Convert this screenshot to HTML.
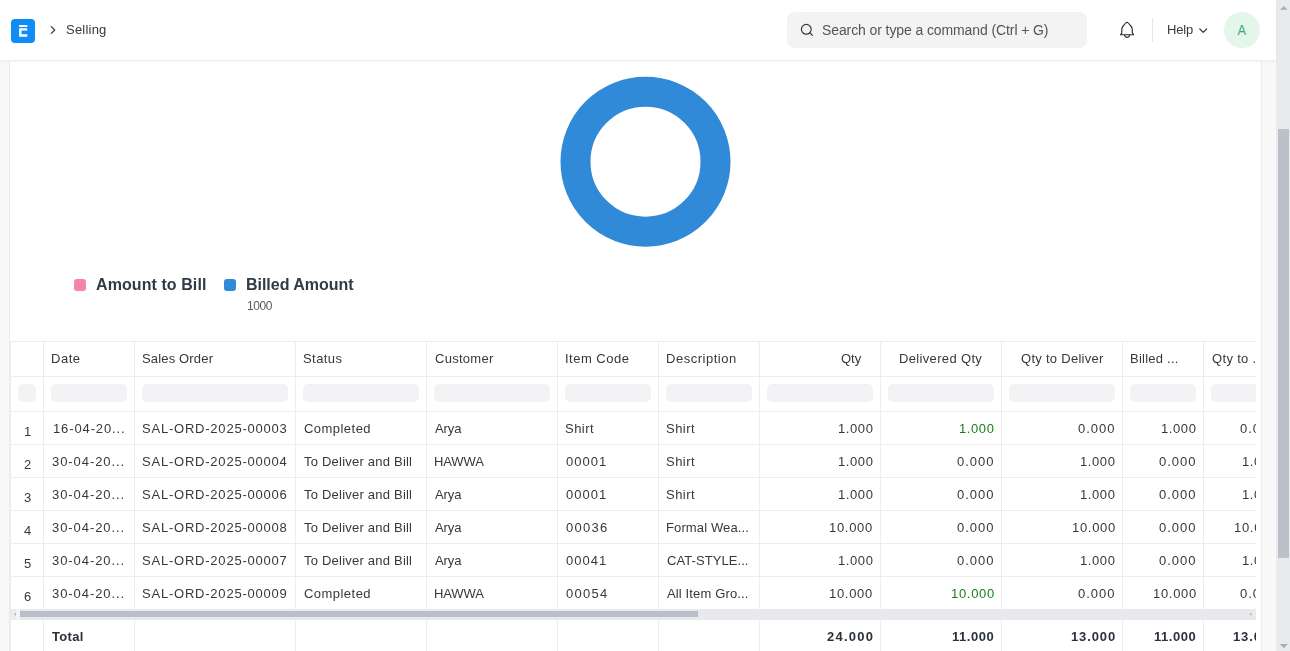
<!DOCTYPE html>
<html><head><meta charset="utf-8"><title>Sales Order Analysis</title>
<style>
*{box-sizing:border-box;margin:0;padding:0}
html,body{width:1290px;height:651px;overflow:hidden;background:#f8f8f8;font-family:"Liberation Sans",sans-serif;color:#383838;font-size:13px}
.t{will-change:transform;position:absolute;white-space:nowrap;line-height:16px;font-size:13px;color:#383838}
#nav{position:absolute;left:0;top:0;width:1276px;height:61px;background:#fff;border-bottom:1px solid #eeeeee;box-shadow:0 1px 3px rgba(0,0,0,.035);z-index:5}
#logo{position:absolute;left:11px;top:19px;width:24px;height:24px;border-radius:4px;background:#0f8cf5}
#search{position:absolute;left:787px;top:12px;width:300px;height:36px;border-radius:8px;background:#f3f3f4}
#vsep{position:absolute;left:1152px;top:18px;width:1px;height:24px;background:#e6e6e6}
#avatar{position:absolute;left:1224px;top:12px;width:36px;height:36px;border-radius:18px;background:#e4f5e9}
#card{position:absolute;left:9px;top:60px;width:1252.500px;height:600px;background:#fff;border-left:1px solid #ececec;border-right:1px solid #ececec}
#vscroll{position:absolute;left:1276px;top:0;width:14px;height:651px;background:#e8ebee}
#vthumb{position:absolute;left:2px;top:129px;width:11px;height:429px;background:#bcc0c8}
.dot{position:absolute;width:12px;height:12px;border-radius:3px}
#tbl{position:absolute;left:10px;top:341px;width:1245.500px;height:310px;overflow:hidden}
.hl{position:absolute;left:0;height:1px;width:1246px;background:#ededed}
.vl{position:absolute;top:0;width:1px;height:310px;background:#ededed}
.pill{position:absolute;top:43px;height:18px;border-radius:5px;background:#f3f3f5}
#hs{position:absolute;left:0;top:268px;width:1246px;height:11px;background:#e7e9ec}
#hst{position:absolute;left:10px;top:2px;width:678px;height:5.500px;background:#b9bfc8}
#hsl{position:absolute;left:0;top:0;width:10px;height:11px;background:linear-gradient(90deg,#eaecef 0,#eaecef 6px,#f2f4f7 6px)}
#hsr{position:absolute;left:1236px;top:0;width:10px;height:11px}
</style></head><body>
<div id="nav">
<div id="logo"><svg width="24" height="24" viewBox="0 0 24 24"><path d="M8.100 6h8.200v2H8.100zM8.100 9.200h7.200q1 0 1 1v1.300h-5.800v3.700h5.800v2.500H8.100z" fill="#fff"/></svg></div>
<svg style="position:absolute;left:48px;top:24px" width="10" height="12" viewBox="0 0 10 12"><path d="M3.300 2.600l3.400 3.400L3.300 9.400" fill="none" stroke="#383838" stroke-width="1.200" stroke-linecap="round" stroke-linejoin="round"/></svg>
<div id="search"><svg style="position:absolute;left:12.600px;top:11.300px" width="14" height="14" viewBox="0 0 14 14"><circle cx="6.300" cy="6.300" r="4.900" fill="none" stroke="#383838" stroke-width="1.200"/><path d="M10 10l2.400 2.400" stroke="#383838" stroke-width="1.200" stroke-linecap="round"/></svg></div>
<svg style="position:absolute;left:1117px;top:20px" width="20" height="20" viewBox="0 0 20 20"><path d="M3.600 14.700L4.800 13V9.300C4.800 7.500 5.600 6.300 7 5L8.700 3C9.300 2.200 10.700 2.200 11.300 3L13 5C14.400 6.300 15.300 7.500 15.300 9.300V13L16.500 14.700ZM7.400 15.200a2.700 2.700 0 0 0 5.300 0" fill="none" stroke="#2d2d2d" stroke-width="1.150" stroke-linecap="round" stroke-linejoin="round"/></svg>
<div id="vsep"></div>
<svg style="position:absolute;left:1198px;top:26px" width="10" height="10" viewBox="0 0 10 10"><path d="M1.800 3l3.400 3.400L8.600 3" fill="none" stroke="#383838" stroke-width="1.200" stroke-linecap="round" stroke-linejoin="round"/></svg>
<div id="avatar"></div>
<div class="t" style="left:65.9px;top:21.8px;letter-spacing:0.22px">Selling</div>
<div class="t" style="left:822.1px;top:22.45px;letter-spacing:-0.1px;font-size:14px;color:#555555">Search or type a command (Ctrl + G)</div>
<div class="t" style="left:1167px;top:21.6px;letter-spacing:-0.14px">Help</div>
<div class="t" style="left:1237.05px;top:21.88px;font-size:14.5px;color:#34a871;transform:scaleX(0.87)">A</div>
</div>
<div id="card"></div>
<svg style="position:absolute;left:545px;top:61px" width="200" height="200" viewBox="0 0 200 200"><circle cx="100.500" cy="100.700" r="70" fill="none" stroke="#318ad8" stroke-width="30"/></svg>
<div class="dot" style="left:74px;top:279px;background:#f683ae"></div>
<div class="dot" style="left:224px;top:279px;background:#318ad8"></div>
<div class="t" style="left:96.2px;top:276.76px;letter-spacing:0.08px;font-size:16px;font-weight:bold;color:#313b44">Amount to Bill</div>
<div class="t" style="left:246.2px;top:276.76px;letter-spacing:-0.03px;font-size:16px;font-weight:bold;color:#313b44">Billed Amount</div>
<div class="t" style="left:246.7px;top:297.74px;letter-spacing:-0.44px;font-size:12px;color:#555b61">1000</div>
<div id="tbl">
<div class="hl" style="top:0px"></div>
<div class="hl" style="top:35px"></div>
<div class="hl" style="top:70px"></div>
<div class="hl" style="top:103px"></div>
<div class="hl" style="top:136px"></div>
<div class="hl" style="top:169px"></div>
<div class="hl" style="top:202px"></div>
<div class="hl" style="top:235px"></div>
<div class="vl" style="left:0px"></div>
<div class="vl" style="left:33px"></div>
<div class="vl" style="left:124px"></div>
<div class="vl" style="left:285px"></div>
<div class="vl" style="left:416px"></div>
<div class="vl" style="left:547px"></div>
<div class="vl" style="left:648px"></div>
<div class="vl" style="left:749px"></div>
<div class="vl" style="left:870px"></div>
<div class="vl" style="left:991px"></div>
<div class="vl" style="left:1112px"></div>
<div class="vl" style="left:1193px"></div>
<div class="vl" style="left:1274px"></div>
<div class="pill" style="left:8px;width:18px"></div>
<div class="pill" style="left:41px;width:76px"></div>
<div class="pill" style="left:132px;width:146px"></div>
<div class="pill" style="left:293px;width:116px"></div>
<div class="pill" style="left:424px;width:116px"></div>
<div class="pill" style="left:555px;width:86px"></div>
<div class="pill" style="left:656px;width:86px"></div>
<div class="pill" style="left:757px;width:106px"></div>
<div class="pill" style="left:878px;width:106px"></div>
<div class="pill" style="left:999px;width:106px"></div>
<div class="pill" style="left:1120px;width:66px"></div>
<div class="pill" style="left:1201px;width:66px"></div>
<div id="hs"><div id="hsl"></div><div id="hst"></div><div id="hsr"></div><svg style="position:absolute;left:0;top:0" width="1246" height="11" viewBox="0 0 1246 11"><path d="M5.800 3.700L4 5.200L5.800 6.700Z" fill="#a3a8af"/><path d="M1240.200 3.700L1242 5.200L1240.200 6.700Z" fill="#a3a8af"/></svg></div>
<div class="t" style="left:40.7px;top:9.6px;letter-spacing:0.52px">Date</div>
<div class="t" style="left:131.8px;top:9.6px;letter-spacing:0.16px">Sales Order</div>
<div class="t" style="left:292.9px;top:9.6px;letter-spacing:0.43px">Status</div>
<div class="t" style="left:424.5px;top:9.6px;letter-spacing:0.28px">Customer</div>
<div class="t" style="left:554.5px;top:9.6px;letter-spacing:0.49px">Item Code</div>
<div class="t" style="left:655.7px;top:9.6px;letter-spacing:0.51px">Description</div>
<div class="t" style="left:830.7px;top:9.6px;letter-spacing:-0.01px">Qty</div>
<div class="t" style="left:889.1px;top:9.6px;letter-spacing:0.34px">Delivered Qty</div>
<div class="t" style="left:1010.8px;top:9.6px;letter-spacing:0.28px">Qty to Deliver</div>
<div class="t" style="left:1119.6px;top:9.6px;letter-spacing:0.24px">Billed ...</div>
<div class="t" style="left:1201.5px;top:9.6px;letter-spacing:0.33px">Qty to ...</div>
<div class="t" style="left:13.6px;top:83.2px">1</div>
<div class="t" style="left:42.6px;top:79.5px;letter-spacing:0.88px">16-04-20...</div>
<div class="t" style="left:131.8px;top:79.5px;letter-spacing:0.78px">SAL-ORD-2025-00003</div>
<div class="t" style="left:293.7px;top:79.5px;letter-spacing:0.46px">Completed</div>
<div class="t" style="left:424.5px;top:79.5px;letter-spacing:-0.1px">Arya</div>
<div class="t" style="left:554.7px;top:79.5px;letter-spacing:0.47px">Shirt</div>
<div class="t" style="left:655.9px;top:79.5px;letter-spacing:0.47px">Shirt</div>
<div class="t" style="left:827.6px;top:79.5px;letter-spacing:0.6px">1.000</div>
<div class="t" style="left:948.8px;top:79.5px;letter-spacing:0.6px;color:#1a7d1a">1.000</div>
<div class="t" style="left:1068.2px;top:79.5px;letter-spacing:1px">0.000</div>
<div class="t" style="left:1150.9px;top:79.5px;letter-spacing:0.6px">1.000</div>
<div class="t" style="left:1230.2px;top:79.5px;letter-spacing:1px">0.000</div>
<div class="t" style="left:13.6px;top:116.2px">2</div>
<div class="t" style="left:42.1px;top:112.5px;letter-spacing:0.93px">30-04-20...</div>
<div class="t" style="left:131.8px;top:112.5px;letter-spacing:0.78px">SAL-ORD-2025-00004</div>
<div class="t" style="left:294.1px;top:112.5px;letter-spacing:0.22px">To Deliver and Bill</div>
<div class="t" style="left:423.7px;top:112.5px;letter-spacing:-0.11px">HAWWA</div>
<div class="t" style="left:555.5px;top:112.5px;letter-spacing:1px">00001</div>
<div class="t" style="left:655.9px;top:112.5px;letter-spacing:0.47px">Shirt</div>
<div class="t" style="left:827.6px;top:112.5px;letter-spacing:0.6px">1.000</div>
<div class="t" style="left:947.2px;top:112.5px;letter-spacing:1px">0.000</div>
<div class="t" style="left:1069.8px;top:112.5px;letter-spacing:0.6px">1.000</div>
<div class="t" style="left:1149.3px;top:112.5px;letter-spacing:1px">0.000</div>
<div class="t" style="left:1231.8px;top:112.5px;letter-spacing:0.6px">1.000</div>
<div class="t" style="left:13.6px;top:149.2px">3</div>
<div class="t" style="left:42.1px;top:145.5px;letter-spacing:0.93px">30-04-20...</div>
<div class="t" style="left:131.8px;top:145.5px;letter-spacing:0.78px">SAL-ORD-2025-00006</div>
<div class="t" style="left:294.1px;top:145.5px;letter-spacing:0.22px">To Deliver and Bill</div>
<div class="t" style="left:424.5px;top:145.5px;letter-spacing:-0.1px">Arya</div>
<div class="t" style="left:555.5px;top:145.5px;letter-spacing:1px">00001</div>
<div class="t" style="left:655.9px;top:145.5px;letter-spacing:0.47px">Shirt</div>
<div class="t" style="left:827.6px;top:145.5px;letter-spacing:0.6px">1.000</div>
<div class="t" style="left:947.2px;top:145.5px;letter-spacing:1px">0.000</div>
<div class="t" style="left:1069.8px;top:145.5px;letter-spacing:0.6px">1.000</div>
<div class="t" style="left:1149.3px;top:145.5px;letter-spacing:1px">0.000</div>
<div class="t" style="left:1231.8px;top:145.5px;letter-spacing:0.6px">1.000</div>
<div class="t" style="left:13.6px;top:182.2px">4</div>
<div class="t" style="left:42.1px;top:178.5px;letter-spacing:0.93px">30-04-20...</div>
<div class="t" style="left:131.8px;top:178.5px;letter-spacing:0.78px">SAL-ORD-2025-00008</div>
<div class="t" style="left:294.1px;top:178.5px;letter-spacing:0.22px">To Deliver and Bill</div>
<div class="t" style="left:424.5px;top:178.5px;letter-spacing:-0.1px">Arya</div>
<div class="t" style="left:555.5px;top:178.5px;letter-spacing:1.3px">00036</div>
<div class="t" style="left:655.7px;top:178.5px;letter-spacing:0.12px">Formal Wea...</div>
<div class="t" style="left:819.3px;top:178.5px;letter-spacing:0.69px">10.000</div>
<div class="t" style="left:947.2px;top:178.5px;letter-spacing:1px">0.000</div>
<div class="t" style="left:1061.5px;top:178.5px;letter-spacing:0.69px">10.000</div>
<div class="t" style="left:1149.3px;top:178.5px;letter-spacing:1px">0.000</div>
<div class="t" style="left:1223.5px;top:178.5px;letter-spacing:0.69px">10.000</div>
<div class="t" style="left:13.6px;top:215.2px">5</div>
<div class="t" style="left:42.1px;top:211.5px;letter-spacing:0.93px">30-04-20...</div>
<div class="t" style="left:131.8px;top:211.5px;letter-spacing:0.78px">SAL-ORD-2025-00007</div>
<div class="t" style="left:294.1px;top:211.5px;letter-spacing:0.22px">To Deliver and Bill</div>
<div class="t" style="left:424.5px;top:211.5px;letter-spacing:-0.1px">Arya</div>
<div class="t" style="left:555.5px;top:211.5px;letter-spacing:1px">00041</div>
<div class="t" style="left:656.7px;top:211.5px;letter-spacing:0.07px">CAT-STYLE...</div>
<div class="t" style="left:827.6px;top:211.5px;letter-spacing:0.6px">1.000</div>
<div class="t" style="left:947.2px;top:211.5px;letter-spacing:1px">0.000</div>
<div class="t" style="left:1069.8px;top:211.5px;letter-spacing:0.6px">1.000</div>
<div class="t" style="left:1149.3px;top:211.5px;letter-spacing:1px">0.000</div>
<div class="t" style="left:1231.8px;top:211.5px;letter-spacing:0.6px">1.000</div>
<div class="t" style="left:13.6px;top:248.2px">6</div>
<div class="t" style="left:42.1px;top:244.5px;letter-spacing:0.93px">30-04-20...</div>
<div class="t" style="left:131.8px;top:244.5px;letter-spacing:0.78px">SAL-ORD-2025-00009</div>
<div class="t" style="left:293.7px;top:244.5px;letter-spacing:0.46px">Completed</div>
<div class="t" style="left:423.7px;top:244.5px;letter-spacing:-0.11px">HAWWA</div>
<div class="t" style="left:555.5px;top:244.5px;letter-spacing:1.3px">00054</div>
<div class="t" style="left:656.7px;top:244.5px;letter-spacing:0.14px">All Item Gro...</div>
<div class="t" style="left:819.3px;top:244.5px;letter-spacing:0.69px">10.000</div>
<div class="t" style="left:940.5px;top:244.5px;letter-spacing:0.69px;color:#1a7d1a">10.000</div>
<div class="t" style="left:1068.2px;top:244.5px;letter-spacing:1px">0.000</div>
<div class="t" style="left:1142.6px;top:244.5px;letter-spacing:0.69px">10.000</div>
<div class="t" style="left:1230.2px;top:244.5px;letter-spacing:1px">0.000</div>
<div class="t" style="left:41.9px;top:287.5px;letter-spacing:0.33px;font-weight:bold;color:#2b313b">Total</div>
<div class="t" style="left:816.6px;top:287.5px;letter-spacing:1.23px;font-weight:bold;color:#2b313b">24.000</div>
<div class="t" style="left:942px;top:287.5px;letter-spacing:0.54px;font-weight:bold;color:#2b313b">11.000</div>
<div class="t" style="left:1060.6px;top:287.5px;letter-spacing:0.87px;font-weight:bold;color:#2b313b">13.000</div>
<div class="t" style="left:1144.1px;top:287.5px;letter-spacing:0.54px;font-weight:bold;color:#2b313b">11.000</div>
<div class="t" style="left:1222.6px;top:287.5px;letter-spacing:0.87px;font-weight:bold;color:#2b313b">13.000</div>
</div>
<div id="vscroll"><div id="vthumb"></div><svg style="position:absolute;left:0;top:0" width="14" height="651" viewBox="0 0 14 651"><path d="M3.800 9.800L7.800 6.100L11.800 9.800Z" fill="#a9aeb5"/><path d="M3.800 643.900L7.800 648.200L11.800 643.900Z" fill="#a9aeb5"/></svg></div>
</body></html>
